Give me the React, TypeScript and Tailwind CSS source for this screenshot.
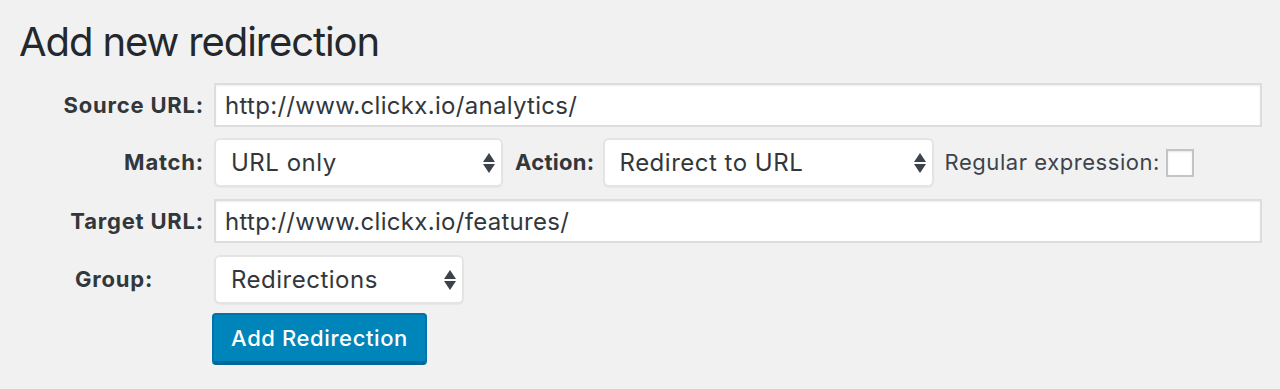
import { useState } from "react";

const font = { fontFamily: "Inter, 'Liberation Sans', sans-serif" };

function Arrows() {
  return (
    <svg
      width="12"
      height="20"
      viewBox="0 0 12 20"
      className="pointer-events-none absolute right-[8px] top-1/2 -translate-y-1/2"
    >
      <path d="M6 0 L12 9 L0 9 Z" fill="#3c434a" />
      <path d="M0 11 L12 11 L6 20 Z" fill="#3c434a" />
    </svg>
  );
}

function Select({
  value,
  options,
  className,
}: {
  value: string;
  options: string[];
  className: string;
}) {
  return (
    <div className={`relative ${className}`}>
      <select
        defaultValue={value}
        className="h-[49px] w-full appearance-none rounded-[6px] border-2 border-[#e4e4e4] bg-white pl-[15px] pr-8 text-[24px] tracking-[0.5px] text-[#32373c] shadow-[0_1px_1px_rgba(0,0,0,0.04)] outline-none"
        style={font}
      >
        {options.map((o) => (
          <option key={o}>{o}</option>
        ))}
      </select>
      <Arrows />
    </div>
  );
}

function TextInput({ value }: { value: string }) {
  return (
    <input
      defaultValue={value}
      className="h-[44px] w-[1048px] border-2 border-[#dddddd] bg-white pl-[9px] text-[24px] tracking-[0.3px] text-[#32373c] shadow-[inset_0_1px_2px_rgba(0,0,0,0.07)] outline-none"
      style={font}
    />
  );
}

const labelCls = "text-[22px] font-bold tracking-[0.8px] text-[#32373c]";

export default function App() {
  const [regex, setRegex] = useState(false);

  return (
    <main className="min-h-[389px] bg-[#f1f1f1]" style={font}>
      <div className="pt-[18px]">
        <h2 className="pl-[19px] text-[40px] font-normal leading-[48px] tracking-[-1.1px] text-[#23282d]">
          Add new redirection
        </h2>

        <div className="mt-[17px] flex flex-col">
          <div className="flex items-center">
            <label className={`w-[204px] text-right ${labelCls}`}>Source URL:</label>
            <div className="ml-[10px]">
              <TextInput value="http://www.clickx.io/analytics/" />
            </div>
          </div>

          <div className="mt-[11px] flex items-center">
            <label className={`w-[204px] text-right ${labelCls}`}>Match:</label>
            <Select
              value="URL only"
              options={["URL only", "URL and login status", "URL and referrer"]}
              className="ml-[10px] w-[289px]"
            />
            <label className={`ml-[12px] text-[22px] font-bold tracking-[0.3px] text-[#32373c]`}>
              Action:
            </label>
            <Select
              value="Redirect to URL"
              options={["Redirect to URL", "Redirect to random post", "Pass-through", "Error (404)"]}
              className="ml-[8px] w-[331px]"
            />
            <span className="ml-[11px] text-[22px] tracking-[0.55px] text-[#3c434a]">
              Regular expression:
            </span>
            <button
              type="button"
              onClick={() => setRegex(!regex)}
              className="ml-[6px] h-[28px] w-[28px] border-2 border-[#c3c4c7] bg-white shadow-[inset_0_1px_2px_rgba(0,0,0,0.1)]"
            />
          </div>

          <div className="mt-[12px] flex items-center">
            <label className={`w-[204px] text-right ${labelCls}`}>Target URL:</label>
            <div className="ml-[10px]">
              <TextInput value="http://www.clickx.io/features/" />
            </div>
          </div>

          <div className="mt-[12px] flex items-center">
            <label className={`w-[204px] pl-[75px] ${labelCls}`}>Group:</label>
            <Select
              value="Redirections"
              options={["Redirections", "Modified Posts"]}
              className="ml-[10px] w-[250px]"
            />
          </div>

          <div className="mt-[9px] pl-[212px]">
            <button
              type="button"
              className="h-[52px] w-[215px] rounded-[4px] border-2 border-b-4 border-[#0073aa] border-b-[#006799] bg-[#0085ba] text-[22px] font-medium tracking-[0.6px] text-white"
            >
              Add Redirection
            </button>
          </div>
        </div>
      </div>
    </main>
  );
}
